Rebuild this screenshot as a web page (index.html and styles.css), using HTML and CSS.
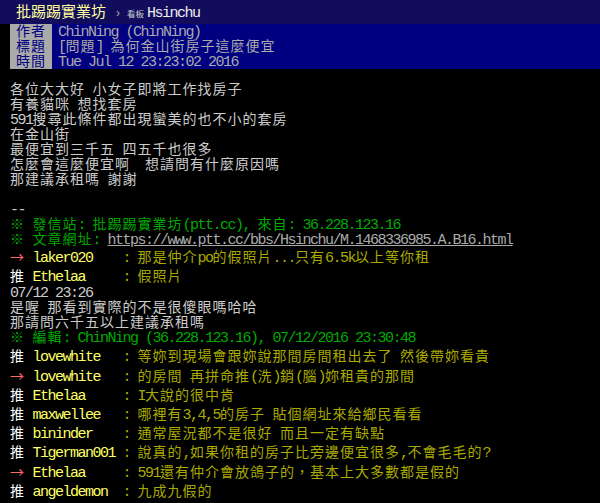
FILE: index.html
```html
<!DOCTYPE html>
<html lang="zh-Hant">
<head>
<meta charset="utf-8">
<title>[問題] 為何金山街房子這麼便宜 - Hsinchu</title>
<link rel="stylesheet" href="styles.css">
</head>
<body>
<div class="topbar"><span class="logo">批踢踢實業坊</span><span class="sep">›</span><span class="kb">看板</span><span class="a board">Hsinchu</span></div>
<div class="meta">
  <div class="meta-row"><span class="meta-tag">作者</span><span class="meta-val"><span class="a">ChinNing (ChinNing)</span></span></div>
  <div class="meta-row"><span class="meta-tag">標題</span><span class="meta-val"><span class="a">[</span>問題<span class="a">] </span>為何金山街房子這麼便宜</span></div>
  <div class="meta-row"><span class="meta-tag">時間</span><span class="meta-val"><span class="a">Tue Jul 12 23:23:02 2016</span></span></div>
</div>
<div class="content">
  <div class="line">各位大大好<span class="a"> </span>小女子即將工作找房子</div>
  <div class="line">有養貓咪<span class="a"> </span>想找套房</div>
  <div class="line"><span class="a">591</span>搜尋此條件都出現蠻美的也不小的套房</div>
  <div class="line">在金山街</div>
  <div class="line">最便宜到三千五<span class="a"> </span>四五千也很多</div>
  <div class="line">怎麼會這麼便宜啊<span class="a">  </span>想請問有什麼原因嗎</div>
  <div class="line">那建議承租嗎<span class="a"> </span>謝謝</div>
  <div class="line"></div>
  <div class="line"><span class="a">--</span></div>
  <div class="line f2">※<span class="a"> </span>發信站<span class="a">: </span>批踢踢實業坊<span class="a">(ptt.cc), </span>來自<span class="a">: 36.228.123.16</span></div>
  <div class="line f2">※<span class="a"> </span>文章網址<span class="a">: </span><span class="a url">https://www.ptt.cc/bbs/Hsinchu/M.1468336985.A.B16.html</span></div>
  <div class="push"><span class="push-tag arrow">→</span><span class="a uid">laker020</span><span class="pc"><span class="a">: </span>那是仲介<span class="a">po</span>的假照片<span class="a">...</span>只有<span class="a">6.5k</span>以上等你租</span></div>
  <div class="push"><span class="push-tag">推</span><span class="a uid">Ethelaa</span><span class="pc"><span class="a">: </span>假照片</span></div>
  <div class="line"><span class="a">07/12 23:26</span></div>
  <div class="line">是喔<span class="a"> </span>那看到實際的不是很傻眼嗎哈哈</div>
  <div class="line">那請問六千五以上建議承租嗎</div>
  <div class="line edit f2">※<span class="a"> </span>編輯<span class="a">: ChinNing (36.228.123.16), 07/12/2016 23:30:48</span></div>
  <div class="push"><span class="push-tag">推</span><span class="a uid">lovewhite</span><span class="pc"><span class="a">: </span>等妳到現場會跟妳說那間房間租出去了<span class="a"> </span>然後帶妳看貴</span></div>
  <div class="push"><span class="push-tag arrow">→</span><span class="a uid">lovewhite</span><span class="pc"><span class="a">: </span>的房間<span class="a"> </span>再拼命推<span class="a">(</span>洗<span class="a">)</span>銷<span class="a">(</span>腦<span class="a">)</span>妳租貴的那間</span></div>
  <div class="push"><span class="push-tag">推</span><span class="a uid">Ethelaa</span><span class="pc"><span class="a">: I</span>大說的很中肯</span></div>
  <div class="push"><span class="push-tag">推</span><span class="a uid">maxwellee</span><span class="pc"><span class="a">: </span>哪裡有<span class="a">3,4,5</span>的房子<span class="a"> </span>貼個網址來給鄉民看看</span></div>
  <div class="push"><span class="push-tag">推</span><span class="a uid">bininder</span><span class="pc"><span class="a">: </span>通常屋況都不是很好<span class="a"> </span>而且一定有缺點</span></div>
  <div class="push"><span class="push-tag">推</span><span class="a uid">Tigerman001</span><span class="pc"><span class="a">: </span>說真的<span class="a">,</span>如果你租的房子比旁邊便宜很多<span class="a">,</span>不會毛毛的<span class="a">?</span></span></div>
  <div class="push"><span class="push-tag arrow">→</span><span class="a uid">Ethelaa</span><span class="pc"><span class="a">: 591</span>還有仲介會放鴿子的，基本上大多數都是假的</span></div>
  <div class="push"><span class="push-tag">推</span><span class="a uid">angeldemon</span><span class="pc"><span class="a">: </span>九成九假的</span></div>
</div>
</body>
</html>
```
FILE: styles.css
```css
* { box-sizing: border-box; }
html, body { margin: 0; padding: 0; background: #000; }
body {
  width: 600px;
  height: 503px;
  overflow: hidden;
  font-family: "Liberation Serif", "Noto Sans CJK TC", serif;
  font-size: 14px;
  letter-spacing: 1px;
  line-height: 15px;
  color: #cccccc;
}
.a {
  font-family: "Liberation Mono", "Noto Sans CJK TC", monospace;
  font-size: 15px;
  letter-spacing: -1.5px;
  line-height: 10px;
  white-space: pre;
}
.topbar {
  height: 24px;
  line-height: 24px;
  background: #110c5c;
  padding-left: 16px;
  white-space: nowrap;
}
.logo { font-size: 15px; letter-spacing: 0; color: #ffff99; }
.sep {
  font-family: "Liberation Sans", sans-serif;
  font-size: 12px;
  color: #aaaaaa;
  margin-left: 10px;
  letter-spacing: 0;
}
.kb { font-size: 8.5px; letter-spacing: 0; color: #cccccc; margin-left: 7px; }
.board { color: #eeeeee; margin-left: 3px; }
.meta { padding-left: 10px; }
.meta-row { display: flex; height: 15px; }
.meta-tag {
  width: 42px;
  padding-left: 6px;
  background: #aaaaaa;
  color: #000080;
}
.meta-val {
  flex: 1;
  padding-left: 6px;
  background: #000080;
  color: #aaaaaa;
  white-space: nowrap;
}
.content { padding: 13px 0 0 10px; }
.line { height: 15px; white-space: nowrap; }
.edit { height: 16px; }
.f2 { color: #00aa00; }
.url { color: #aaaaaa; text-decoration: underline; }
.push { height: 19.2px; line-height: 19.2px; white-space: nowrap; }
.push-tag {
  display: inline-block;
  width: 22.5px;
  font-family: "Noto Sans CJK TC", sans-serif;
  color: #ffffff;
}
.push-tag.arrow { color: #ff6666; }
.uid { display: inline-block; width: 90px; color: #ffff66; }
.pc { color: #aaaa00; }
```
